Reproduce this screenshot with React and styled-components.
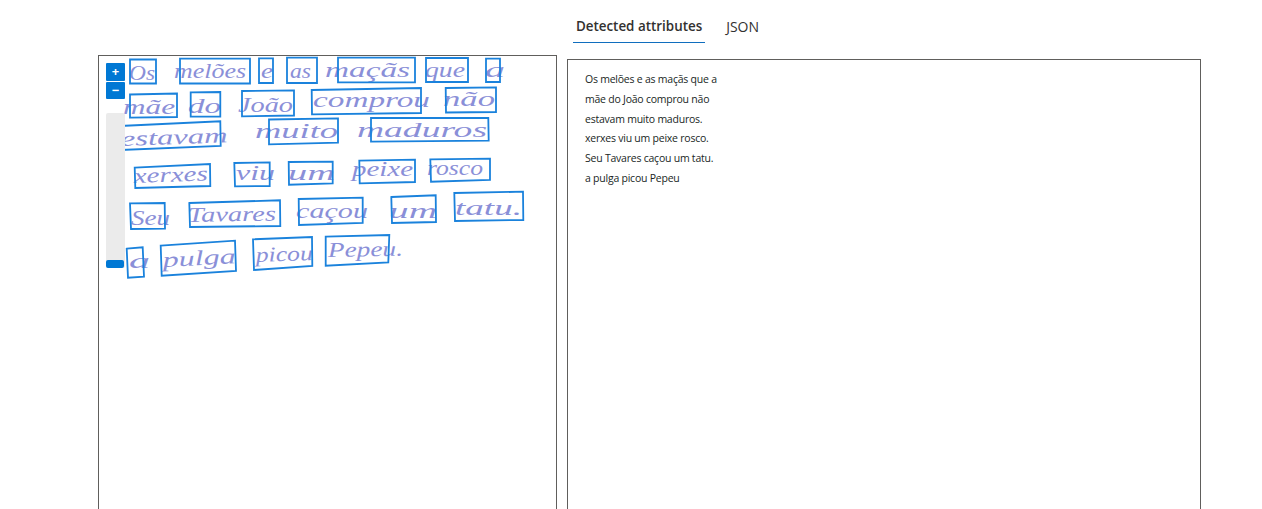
import React from "react";
import styled, { createGlobalStyle } from "styled-components";

const GlobalStyle = createGlobalStyle`
  html, body {
    margin: 0;
    padding: 0;
    background: #fff;
    overflow: hidden;
  }
`;

const Page = styled.div`
  height: 509px;
  overflow: hidden;
  font-family: "Open Sans", "Noto Sans", sans-serif;
  color: #323130;
`;

const TabBar = styled.div`
  display: flex;
  justify-content: center;
  gap: 18px;
  height: 43px;
  padding-left: 73px;
  box-sizing: border-box;
`;

const Tab = styled.div`
  padding: 17px 3px 0;
  height: 43px;
  box-sizing: border-box;
  font-size: ${({ $active }) => ($active ? "13.4px" : "14px")};
  line-height: 19px;
  font-weight: ${({ $active }) => ($active ? 600 : 400)};
  border-bottom: 1.5px solid ${({ $active }) => ($active ? "#106ebe" : "transparent")};
`;

const Panels = styled.div`
  display: flex;
  align-items: flex-start;
  gap: 10px;
  padding: 12px 0 0 98px;
`;

const ImagePanel = styled.div`
  position: relative;
  width: 457px;
  height: 500px;
  border: 1px solid #605e5c;
  flex: none;
`;

const Scan = styled.svg`
  display: block;
  width: 457px;
  height: 240px;
`;

const Ink = styled.text`
  font-family: "Liberation Serif", serif;
  font-style: italic;
  font-size: 21px;
  fill: #8a8fd8;
`;

const WordBox = styled.polygon`
  fill: none;
  stroke: #1a82dc;
  stroke-width: 1.8;
`;

const ZoomControls = styled.div`
  position: absolute;
  top: 7px;
  left: 7px;
  width: 19px;
  display: flex;
  flex-direction: column;
  gap: 14px;
`;

const ZoomButtons = styled.div`
  display: flex;
  flex-direction: column;
  gap: 1px;
`;

const ZoomButton = styled.div`
  height: 17.5px;
  background: #0078d4;
  border-radius: 1px;
  color: #fff;
  display: flex;
  align-items: center;
  justify-content: center;
  font-size: 13px;
  font-weight: 700;
  line-height: 1;
`;

const SliderTrack = styled.div`
  height: 155px;
  background: #ebebeb;
  border-radius: 2px;
  display: flex;
  align-items: flex-end;
`;

const SliderThumb = styled.div`
  width: 18px;
  height: 8px;
  background: #0078d4;
  border-radius: 2px;
`;

const TextPanel = styled.div`
  width: 634px;
  height: 500px;
  margin-top: 4px;
  padding: 10px 17px;
  box-sizing: border-box;
  border: 1px solid #605e5c;
  flex: none;
  font-size: 10.5px;
  letter-spacing: -0.23px;
  line-height: 19.8px;
  color: #201f1e;
`;

const TextLine = styled.div`
  white-space: nowrap;
`;

// hand written words of the scan, in page coordinates
const ink = [
  { t: "Os", x: 129, y: 80, w: 26 },
  { t: "melões", x: 174, y: 78, w: 72 },
  { t: "e", x: 261, y: 78, w: 12 },
  { t: "as", x: 290, y: 78, w: 21 },
  { t: "maçãs", x: 325, y: 77, w: 85 },
  { t: "que", x: 425, y: 77, w: 40 },
  { t: "a", x: 485, y: 77, w: 20 },
  { t: "mãe", x: 123, y: 114, w: 52 },
  { t: "do", x: 188, y: 113, w: 33 },
  { t: "João", x: 238, y: 112, w: 55 },
  { t: "comprou", x: 313, y: 107, w: 117 },
  { t: "não", x: 443, y: 106, w: 52 },
  { t: "estavam", x: 121, y: 146, w: 107, r: -2 },
  { t: "muito", x: 255, y: 138, w: 83 },
  { t: "maduros", x: 357, y: 137, w: 130 },
  { t: "xerxes", x: 134, y: 183, w: 74, r: -2 },
  { t: "viu", x: 236, y: 180, w: 39 },
  { t: "um", x: 288, y: 180, w: 47 },
  { t: "peixe", x: 352, y: 176, w: 61 },
  { t: "rosco", x: 427, y: 175, w: 56 },
  { t: "Seu", x: 131, y: 225, w: 39 },
  { t: "Tavares", x: 188, y: 222, w: 88, r: -1 },
  { t: "caçou", x: 296, y: 218, w: 72 },
  { t: "um", x: 389, y: 218, w: 48 },
  { t: "tatu.", x: 455, y: 215, w: 67 },
  { t: "a", x: 129, y: 268, w: 21 },
  { t: "pulga", x: 163, y: 267, w: 73, r: -3 },
  { t: "picou", x: 256, y: 262, w: 57, r: -2 },
  { t: "Pepeu.", x: 328, y: 257, w: 75, r: -1 },
];

const boxes = [
  "130,59.5 156,59.5 156,83.5 130,83.5",
  "180,58.7 250,58.7 250,83.5 180,83.5",
  "259,58.3 273,58.3 273,83 259,83",
  "287,57.7 317,57.7 317,83 287,83",
  "338,57.7 415,57.7 415,82.3 338,82.3",
  "426,58 468,58 468,82 426,82",
  "486,58.7 500,58.7 500,82 486,82",
  "130,94.5 177,93.5 177,117 130,117.7",
  "190.7,92.3 220.3,92 220.3,116.5 190.7,116.7",
  "242,91 294,90.3 294,115.5 242,116.3",
  "311.7,90 421,88 421,113 312,114.3",
  "445.7,88 496,87.3 496,112 446,112.5",
  "119.7,126 220.3,121.3 220.7,146 120.7,150",
  "269,119.5 338,118.3 338,142.7 269,144.3",
  "371,118 488.3,118 488.7,140.7 371,141.7",
  "134.7,167.7 210,164 210.3,186 135.3,188",
  "234.3,163 269.7,162.3 269.7,186 235,186.3",
  "288.7,162 332.7,161.7 332.7,183.3 289,184.7",
  "359.3,160.7 415,159.7 415,182 359.7,183.3",
  "430.3,159.3 490,158.7 490,180 431,181.7",
  "130,203.3 164.7,203 165,228.7 131,229",
  "189.3,203 280,200.3 280.3,226 190,227",
  "298.7,199 362.7,197.7 362.7,223 299,225",
  "391.3,197 435.7,195.3 436,222 392,223",
  "454.3,193 523,191.7 523.3,220 455,221",
  "126.7,248.7 142.7,247.3 144,276.7 128,277.7",
  "160.7,245.7 235,240.7 236,271 161.7,275.7",
  "253,239.3 312,237 312.3,266 254,270",
  "325.7,236.7 389.3,235 388.3,262.3 325.7,265.7",
];

const lines = [
  "Os melões e as maçãs que a",
  "mãe do João comprou não",
  "estavam muito maduros.",
  "xerxes viu um peixe rosco.",
  "Seu Tavares caçou um tatu.",
  "a pulga picou Pepeu",
];

const App = () => (
  <Page>
    <GlobalStyle />
    <TabBar>
      <Tab $active>Detected attributes</Tab>
      <Tab>JSON</Tab>
    </TabBar>
    <Panels>
      <ImagePanel>
        <Scan viewBox="99 56 457 240">
          {ink.map((w, i) => (
            <Ink
              key={i}
              x={w.x}
              y={w.y}
              textLength={w.w}
              lengthAdjust="spacingAndGlyphs"
              transform={w.r ? `rotate(${w.r} ${w.x} ${w.y})` : undefined}
            >
              {w.t}
            </Ink>
          ))}
          {boxes.map((points, i) => (
            <WordBox key={i} points={points} />
          ))}
        </Scan>
        <ZoomControls>
          <ZoomButtons>
            <ZoomButton>+</ZoomButton>
            <ZoomButton>−</ZoomButton>
          </ZoomButtons>
          <SliderTrack>
            <SliderThumb />
          </SliderTrack>
        </ZoomControls>
      </ImagePanel>
      <TextPanel>
        {lines.map((line) => (
          <TextLine key={line}>{line}</TextLine>
        ))}
      </TextPanel>
    </Panels>
  </Page>
);

export default App;
